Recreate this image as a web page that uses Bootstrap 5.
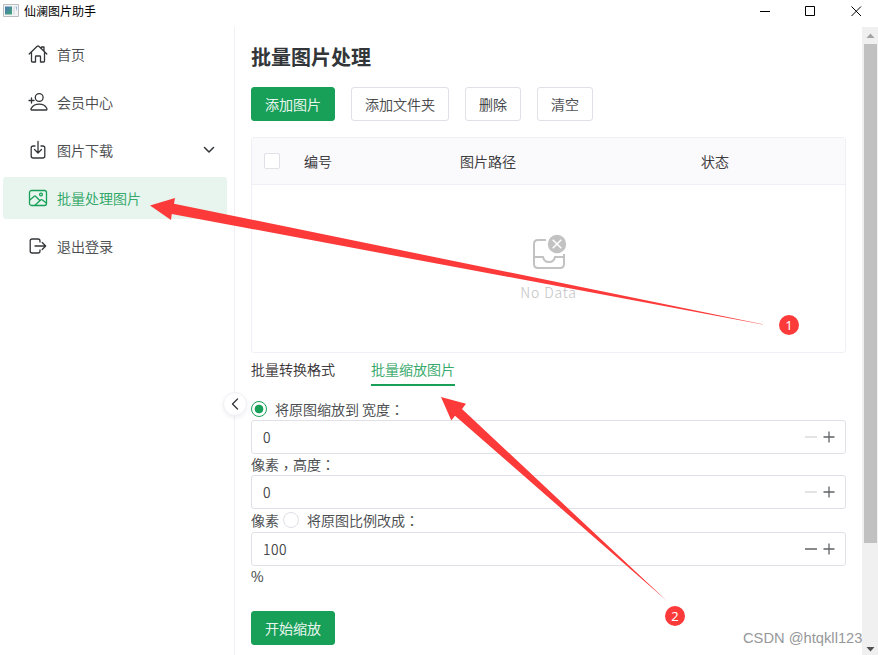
<!DOCTYPE html>
<html lang="zh-CN">
<head>
<meta charset="utf-8">
<meta name="viewport" content="width=device-width, initial-scale=1">
<title>仙澜图片助手</title>
<link href="https://cdn.jsdelivr.net/npm/bootstrap@5.3.0/dist/css/bootstrap.min.css" rel="stylesheet">
<style>
:root{--brand:#18a058;--ink:#333639;--line:#efeff5;--edge:#e0e0e6}
body{font:300 14px/22px "Noto Sans CJK SC","Noto Sans",sans-serif;color:var(--ink);width:878px;height:655px;background:#fff;-webkit-text-stroke:.2px}
svg{display:block;flex:none}
.ico{fill:none;stroke:currentColor;stroke-linecap:round;stroke-linejoin:round}
.titlebar{height:27px;color:#000;padding-left:3px}
.titlebar .caption{font-size:12px;line-height:22px;height:23px;font-weight:400;margin-left:5px;-webkit-text-stroke:0}
.titlebar .winbtn{width:46px;height:23px}
.titlebar .controls{margin-right:-1px}
.sidebar{width:235px;border-right:1px solid var(--line);padding:6px 7px 0 3px}
.sidebar .entry{height:42px;margin-bottom:6px;padding:0 11px 0 25px;border-radius:3px;color:var(--ink);text-decoration:none}
.sidebar .entry svg:first-child{margin-right:9px}
.sidebar .current{background:#e7f5ee;color:var(--brand)}
.toggle{left:223px;top:392px;width:24px;height:24px;background:#fff;border:1px solid var(--line);box-shadow:0 2px 4px rgba(0,0,0,.06)}
.content{padding:14px 16px 0;min-width:0}
.content h1{font-size:20px;line-height:32px;font-weight:700;margin-bottom:14px;-webkit-text-stroke:0}
.act{height:34px;padding:1px 13px 1px;font-size:14px;font-weight:300;line-height:30px;border-radius:3px;border:1px solid var(--edge);color:var(--ink);background:#fff}
.act.main{background:var(--brand);border-color:var(--brand);color:#fff}
.grid-box{height:216px;margin-top:16px;border:1px solid var(--line);border-radius:3px}
.grid-box .heads{height:47px;background:#fafafc;border-bottom:1px solid var(--line);color:#1f2225}
.tick{width:16px;height:16px;border:1px solid var(--edge);border-radius:2px;background:#fff;margin-left:12px}
.col-no{width:156px;padding-left:24px}.col-path{width:265px}
.none{color:#c2c2c2;padding-top:48px}
.none span{letter-spacing:.85px;line-height:22px;margin-top:10px;-webkit-text-stroke:0}
.tabset{gap:36px;height:33px;padding-top:6px;color:#1f2225}
.tabset a{color:inherit;text-decoration:none;height:27px;line-height:21px}
.tabset a.on{color:var(--brand);border-bottom:2px solid var(--brand)}
.resize-form{padding-top:13px}
.field{height:34px;border:1px solid var(--edge);border-radius:3px;padding:0 10px 0 11px}
.val{letter-spacing:.5px}
.lbl{height:21px;line-height:21px}
.lbl.tall{height:23px}
.lbl.tall .radio{margin-bottom:2px}
.wide-punct{font-family:"Noto Sans CJK TC",sans-serif}
.low{line-height:1;vertical-align:-3px}
.radio{width:16px;height:16px;border:1px solid var(--edge);border-radius:50%;margin-bottom:1px}
.radio.on{border-color:var(--brand);background:radial-gradient(circle,var(--brand) 4px,transparent 4.7px)}
.start{margin-top:24px}
.rail{width:16px;background:#f0f0f0}
.rail .thumb{width:13px;height:499px;margin-left:2px;background:#c1c1c1}
.over{left:0;top:0;pointer-events:none;-webkit-text-stroke:0}
.watermark{left:743px;top:627px;font:400 14.7px/22px "Liberation Sans",sans-serif;color:#96989a;white-space:nowrap;-webkit-text-stroke:0}
</style>
<script src="https://cdn.jsdelivr.net/npm/bootstrap@5.3.0/dist/js/bootstrap.bundle.min.js"></script>
</head>
<body class="position-relative overflow-hidden d-flex flex-column">
<header class="titlebar d-flex align-items-start">
  <svg width="16" height="23" viewBox="0 0 16 23"><defs><linearGradient id="g" x2="1" y2="1"><stop stop-color="#4a78b8"/><stop offset="1" stop-color="#43a574"/></linearGradient></defs><path d="M.5 4.500h15v12H.5z" fill="#f4f4f4" stroke="#b9bdc1"/><path d="M2 6.500h7v8H2z" fill="url(#g)"/><path d="M10 6.500h2v8h-2z" fill="#dde5e8"/><path d="M12.500 6.500H14v5z" fill="#8db4de"/></svg>
  <span class="caption">仙澜图片助手</span>
  <div class="controls ms-auto d-flex">
    <span class="winbtn"><svg width="46" height="23" stroke="#000"><path d="M19 11.500h10"/></svg></span>
    <span class="winbtn"><svg width="46" height="23" stroke="#000" fill="none"><path d="M18.500 6.500h9v9h-9z"/></svg></span>
    <span class="winbtn"><svg width="46" height="23" stroke="#000" stroke-width="1"><path d="M18.500 6.500l9.500 9.500m0-9.500L18.500 16"/></svg></span>
  </div>
</header>
<div class="d-flex flex-grow-1">
  <nav class="sidebar flex-shrink-0">
    <a class="entry d-flex align-items-center" href="#"><svg class="ico" width="20" height="20" stroke-width="1.300"><path d="M1.200 10L9.200 2.300q.8-.7 1.600 0L18.800 10M3.500 8v9.200q0 .8.800.8H7.500v-5.200q0-.8.800-.8h3.400q.8 0 .8.800V18h3.200q.8 0 .8-.8V8M13.500 4.500V3H16v4"/></svg><span>首页</span></a>
    <a class="entry d-flex align-items-center" href="#"><svg class="ico" width="20" height="20" stroke-width="1.300"><circle cx="11.200" cy="5.500" r="3.900"/><path d="M3.500 18c-.8 0-.7-1 0-2.200 3.200-5 12.300-5 15 0 .7 1.200.5 2.200-.3 2.200zM3.500 6v5M1 8.500h5"/></svg><span>会员中心</span></a>
    <a class="entry d-flex align-items-center" href="#"><svg class="ico" width="20" height="20" stroke-width="1.300"><path d="M7 6H5.200Q3.200 6 3.200 8v8q0 2 2 2h9.600q2 0 2-2V8q0-2-2-2H13M10 1.500v11.300M6.500 9.500L10 13l3.500-3.500"/></svg><span>图片下载</span><svg class="ico ms-auto" width="14" height="14" stroke-width="1.500"><path d="M2.500 4.500L7 9l4.500-4.500"/></svg></a>
    <a class="entry current d-flex align-items-center" href="#"><svg class="ico" width="20" height="20" stroke-width="1.300"><rect x="1.500" y="2.500" width="17" height="15" rx="2"/><circle cx="13" cy="6.500" r="1.400"/><path d="M1.800 12l4.500-3.800q.6-.5 1.200 0l4.300 4.300M7 17.300l5.900-5.500q.6-.5 1.200 0l4.200 3.300"/></svg><span>批量处理图片</span></a>
    <a class="entry d-flex align-items-center" href="#"><svg class="ico" width="20" height="20" stroke-width="1.300"><path d="M12 6V5q0-2-2-2H4.200q-2 0-2 2v10q0 2 2 2H10q2 0 2-2v-1M7 10h10.500M14.200 6.500L17.700 10l-3.500 3.500"/></svg><span>退出登录</span></a>
  </nav>
  <main class="content flex-grow-1">
    <h1>批量图片处理</h1>
    <div class="d-flex gap-3">
      <button class="btn act main">添加图片</button><button class="btn act">添加文件夹</button><button class="btn act">删除</button><button class="btn act">清空</button>
    </div>
    <section class="grid-box">
      <div class="heads d-flex align-items-center"><span class="tick"></span><span class="col-no">编号</span><span class="col-path ps-4">图片路径</span><span>状态</span></div>
      <div class="none d-flex flex-column align-items-center">
        <svg width="36" height="38" viewBox="0 0 36 38"><g fill="none" stroke="#c2c2c2" stroke-width="2"><path d="M15 7H7Q3 7 3 11v20q0 4 4 4h22q4 0 4-4V21"/><path d="M3 24h9q1 5 6 5t6-5h9" /></g><circle cx="26" cy="11" r="9.200" fill="#c2c2c2"/><path d="M21.700 6.700l8.600 8.600m0-8.600l-8.600 8.600" stroke="#fff" stroke-width="1.500"/></svg>
        <span>No Data</span>
      </div>
    </section>
    <div class="tabset d-flex"><a href="#">批量转换格式</a><a class="on" href="#">批量缩放图片</a></div>
    <div class="resize-form">
      <div class="lbl d-flex align-items-center"><span class="radio on"></span><span class="ms-2">将原图缩放到 宽度<span class="wide-punct" lang="zh-TW">：</span></span></div>
      <div class="field d-flex align-items-center"><span class="val">0</span><svg class="ms-auto" width="30" height="14" fill="none" stroke="#606366" stroke-width="1.300"><path d="M0 7h12" stroke="#d5d5d8"/><path d="M18.500 7h11M24 1.500v11"/></svg></div>
      <div class="lbl">像素<span class="wide-punct low" lang="zh-TW">，</span>高度<span class="wide-punct" lang="zh-TW">：</span></div>
      <div class="field d-flex align-items-center"><span class="val">0</span><svg class="ms-auto" width="30" height="14" fill="none" stroke="#606366" stroke-width="1.300"><path d="M0 7h12" stroke="#d5d5d8"/><path d="M18.500 7h11M24 1.500v11"/></svg></div>
      <div class="lbl tall d-flex align-items-center"><span>像素</span><span class="radio ms-1"></span><span class="ms-2">将原图比例改成<span class="wide-punct" lang="zh-TW">：</span></span></div>
      <div class="field d-flex align-items-center"><span class="val">100</span><svg class="ms-auto" width="30" height="14" fill="none" stroke="#606366" stroke-width="1.300"><path d="M0 7h12M18.500 7h11M24 1.500v11"/></svg></div>
      <div class="lbl">%</div>
    </div>
    <button class="btn act main start">开始缩放</button>
  </main>
  <div class="rail d-flex flex-column">
    <svg width="16" height="17"><path d="M4.500 11L8.500 6.500l4 4.500z" fill="#a3a3a3"/></svg>
    <div class="thumb"></div>
    <svg class="mt-auto" width="16" height="17"><path d="M4.500 9l4 4.500 4-4.500z" fill="#505050"/></svg>
  </div>
</div>
<span class="toggle position-absolute rounded-circle d-flex align-items-center justify-content-center"><svg class="ico" width="12" height="14" stroke-width="1.300"><path d="M8.500 2L3.500 7l5 5"/></svg></span>
<svg class="over position-absolute" width="878" height="655" fill="#fb3a39">
  <path d="M150 205.500L175 198l-1 5.700L775 326.800 171.800 214l-.8 6z"/>
  <path d="M441 397l25 6.700-4 5.300 205 192L455 415.700l-3.700 4.800z"/>
  <circle cx="789" cy="325" r="10"/><circle cx="675" cy="616" r="10"/>
  <g fill="#fff" font-family="Noto Sans, sans-serif" font-size="13" font-weight="400" text-anchor="middle"><text x="789" y="329.500">1</text><text x="675" y="620.500">2</text></g>
</svg>
<span class="watermark position-absolute">CSDN @htqkll123</span>
</body>
</html>
